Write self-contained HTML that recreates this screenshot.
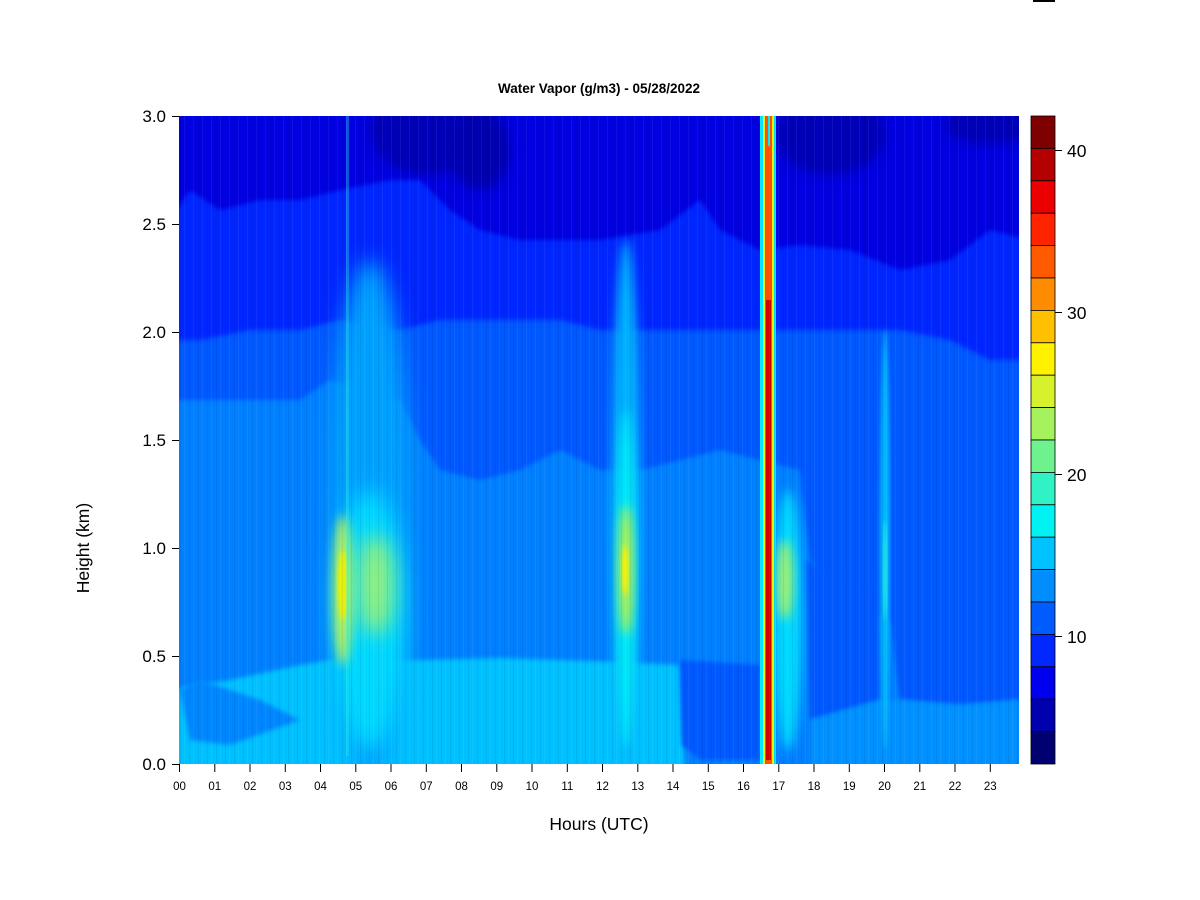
<!DOCTYPE html>
<html><head><meta charset="utf-8"><style>
html,body{margin:0;padding:0;background:#fff;width:1200px;height:900px;overflow:hidden}
svg{display:block}
text{font-family:"Liberation Sans",Arial,sans-serif;fill:#000}
</style></head><body>
<svg width="1200" height="900" viewBox="0 0 1200 900" xmlns="http://www.w3.org/2000/svg">
<defs>
<clipPath id="pc"><rect x="179" y="116" width="840" height="648"/></clipPath>
<filter id="b2" x="-20%" y="-20%" width="140%" height="140%"><feGaussianBlur stdDeviation="2"/></filter>
<filter id="b5" x="-50%" y="-50%" width="200%" height="200%"><feGaussianBlur stdDeviation="5"/></filter>
<filter id="b10" x="-50%" y="-50%" width="200%" height="200%"><feGaussianBlur stdDeviation="10"/></filter>
<pattern id="str" width="9" height="10" patternUnits="userSpaceOnUse">
<rect x="0" y="0" width="1" height="10" fill="#000" opacity="0.07"/>
<rect x="4" y="0" width="1" height="10" fill="#fff" opacity="0.06"/>
</pattern>
</defs>
<rect x="1033" y="0" width="22" height="2" fill="#000"/>
<text x="599" y="93" font-size="13.5" font-weight="bold" text-anchor="middle">Water Vapor (g/m3) - 05/28/2022</text>

<g clip-path="url(#pc)">
<rect x="179" y="116" width="840" height="648" fill="#0080FF"/>
<polygon fill="#0058FF" filter="url(#b2)" points="170,110 1030,110 1030,700 1019,700 960,705 900,700 890,620 840,600 810,560 800,470 760,460 720,450 680,460 640,470 600,470 560,450 520,470 480,480 440,470 420,440 400,400 330,380 300,400 250,400 200,400 170,400"/>
<polygon fill="#0028FF" filter="url(#b2)" points="170,110 1030,110 1030,360 990,360 950,340 900,330 850,330 800,330 740,330 700,330 660,330 600,330 560,320 520,320 480,320 440,320 400,330 340,320 300,330 250,330 200,340 170,340"/>
<polygon fill="#0000E0" filter="url(#b2)" points="170,110 1030,110 1030,240 990,230 950,260 900,270 850,250 800,245 760,250 720,230 700,200 660,230 600,240 560,240 520,240 480,230 450,210 420,180 390,180 340,190 300,200 260,200 220,210 190,190 170,220"/>
<ellipse cx="430" cy="130" rx="60" ry="45" fill="#0000B8" filter="url(#b5)"/>
<ellipse cx="480" cy="150" rx="30" ry="40" fill="#0000B0" filter="url(#b5)"/>
<ellipse cx="830" cy="135" rx="55" ry="40" fill="#0000B8" filter="url(#b5)"/>
<ellipse cx="990" cy="125" rx="45" ry="20" fill="#0000B8" filter="url(#b5)"/>
<polygon fill="#00C0FF" filter="url(#b2)" points="170,690 230,680 300,665 330,660 420,660 500,658 560,660 620,662 680,665 685,770 170,770"/>
<polygon fill="#0086FF" filter="url(#b2)" points="180,690 200,680 230,690 260,700 300,720 230,745 190,740"/>
<polygon fill="#0058FF" filter="url(#b2)" points="680,660 760,665 760,760 700,760 682,745"/>
<polygon fill="#0058FF" filter="url(#b2)" points="805,560 880,600 880,700 810,720"/>
<polygon fill="#0090FF" filter="url(#b2)" points="810,770 810,720 880,700 900,700 960,705 1019,700 1019,770"/>
<!-- plume 04-06 -->
<ellipse cx="370" cy="520" rx="40" ry="260" fill="#00A0FF" filter="url(#b10)"/>
<ellipse cx="370" cy="620" rx="36" ry="130" fill="#00D8FF" filter="url(#b10)"/>
<ellipse cx="343" cy="590" rx="10" ry="75" fill="#B0F060" filter="url(#b5)"/>
<ellipse cx="343" cy="585" rx="5" ry="35" fill="#F0F000" filter="url(#b2)"/>
<ellipse cx="376" cy="585" rx="18" ry="50" fill="#90F080" filter="url(#b10)"/>
<rect x="346" y="116" width="3" height="640" fill="#20F0E0" opacity="0.35"/>
<!-- plume 12-13 -->
<ellipse cx="626" cy="500" rx="14" ry="260" fill="#00B0FF" filter="url(#b5)"/>
<ellipse cx="626" cy="580" rx="10" ry="170" fill="#00E8F8" filter="url(#b5)"/>
<ellipse cx="626" cy="570" rx="7" ry="65" fill="#C0F040" filter="url(#b5)"/>
<ellipse cx="625" cy="570" rx="3" ry="25" fill="#FFF000" filter="url(#b2)"/>
<!-- 17 right blob -->
<ellipse cx="788" cy="620" rx="14" ry="130" fill="#00D8FF" filter="url(#b5)"/>
<ellipse cx="785" cy="580" rx="8" ry="40" fill="#A0F070" filter="url(#b5)"/>
<!-- thin plume 20 -->
<ellipse cx="885" cy="540" rx="5" ry="210" fill="#00B8FF" filter="url(#b2)"/>
<ellipse cx="885" cy="570" rx="2" ry="50" fill="#20F0E8" filter="url(#b2)"/>
<!-- red line -->
<rect x="760" y="116" width="16" height="648" fill="#00E8FF"/>
<rect x="763" y="116" width="11" height="648" fill="#F0F000"/>
<rect x="765" y="116" width="7" height="648" fill="#FF5000"/>
<rect x="766" y="300" width="5" height="460" fill="#D00000"/>
<rect x="768" y="116" width="2" height="30" fill="#00E8FF"/>
<rect x="179" y="116" width="840" height="648" fill="url(#str)"/>
</g>

<g stroke="#000" stroke-width="1">
<path d="M172 116.5h7M172 224.5h7M172 332.5h7M172 440.5h7M172 548.5h7M172 656.5h7M172 764.5h7"/>
</g>
<g font-size="17" text-anchor="end">
<text x="166" y="122">3.0</text>
<text x="166" y="230">2.5</text>
<text x="166" y="338">2.0</text>
<text x="166" y="446">1.5</text>
<text x="166" y="554">1.0</text>
<text x="166" y="662">0.5</text>
<text x="166" y="770">0.0</text>
</g>
<text transform="translate(89,548) rotate(-90)" font-size="17.5" text-anchor="middle">Height (km)</text>

<g font-size="11.5" text-anchor="middle">
<text x="179.5" y="790">00</text><text x="214.8" y="790">01</text><text x="250" y="790">02</text><text x="285.3" y="790">03</text><text x="320.5" y="790">04</text><text x="355.8" y="790">05</text><text x="391" y="790">06</text><text x="426.3" y="790">07</text><text x="461.5" y="790">08</text><text x="496.8" y="790">09</text><text x="532" y="790">10</text><text x="567.3" y="790">11</text><text x="602.5" y="790">12</text><text x="637.8" y="790">13</text><text x="673" y="790">14</text><text x="708.3" y="790">15</text><text x="743.5" y="790">16</text><text x="778.8" y="790">17</text><text x="814" y="790">18</text><text x="849.3" y="790">19</text><text x="884.5" y="790">20</text><text x="919.8" y="790">21</text><text x="955" y="790">22</text><text x="990.3" y="790">23</text>
</g>
<g stroke="#000" stroke-width="1">
<path d="M179.5 764v8M214.8 764v8M250 764v8M285.3 764v8M320.5 764v8M355.8 764v8M391 764v8M426.3 764v8M461.5 764v8M496.8 764v8M532 764v8M567.3 764v8M602.5 764v8M637.8 764v8M673 764v8M708.3 764v8M743.5 764v8M778.8 764v8M814 764v8M849.3 764v8M884.5 764v8M919.8 764v8M955 764v8M990.3 764v8"/>
</g>
<text x="599" y="830" font-size="17.5" text-anchor="middle">Hours (UTC)</text>

<g stroke="#000" stroke-width="0.8">
<rect x="1031" y="116" width="24" height="32.4" fill="#7F0000"/>
<rect x="1031" y="148.4" width="24" height="32.4" fill="#B40000"/>
<rect x="1031" y="180.8" width="24" height="32.4" fill="#EA0000"/>
<rect x="1031" y="213.2" width="24" height="32.4" fill="#FF2400"/>
<rect x="1031" y="245.6" width="24" height="32.4" fill="#FF5A00"/>
<rect x="1031" y="278" width="24" height="32.4" fill="#FF8C00"/>
<rect x="1031" y="310.4" width="24" height="32.4" fill="#FFC000"/>
<rect x="1031" y="342.8" width="24" height="32.4" fill="#FFF200"/>
<rect x="1031" y="375.2" width="24" height="32.4" fill="#D6F22C"/>
<rect x="1031" y="407.6" width="24" height="32.4" fill="#A6F25C"/>
<rect x="1031" y="440" width="24" height="32.4" fill="#6EF28E"/>
<rect x="1031" y="472.4" width="24" height="32.4" fill="#30F2C4"/>
<rect x="1031" y="504.8" width="24" height="32.4" fill="#00F2F2"/>
<rect x="1031" y="537.2" width="24" height="32.4" fill="#00C2FF"/>
<rect x="1031" y="569.6" width="24" height="32.4" fill="#008EFF"/>
<rect x="1031" y="602" width="24" height="32.4" fill="#005CFF"/>
<rect x="1031" y="634.4" width="24" height="32.4" fill="#0028FF"/>
<rect x="1031" y="666.8" width="24" height="32.4" fill="#0000EE"/>
<rect x="1031" y="699.2" width="24" height="32.4" fill="#0000AE"/>
<rect x="1031" y="731.6" width="24" height="32.4" fill="#000070"/>
<path d="M1055 150.5h7M1055 312.5h7M1055 474.5h7M1055 636.5h7" stroke-width="1"/>
</g>
<g font-size="17.5">
<text x="1067" y="157">40</text>
<text x="1067" y="319">30</text>
<text x="1067" y="481">20</text>
<text x="1067" y="643">10</text>
</g>
</svg>
</body></html>
